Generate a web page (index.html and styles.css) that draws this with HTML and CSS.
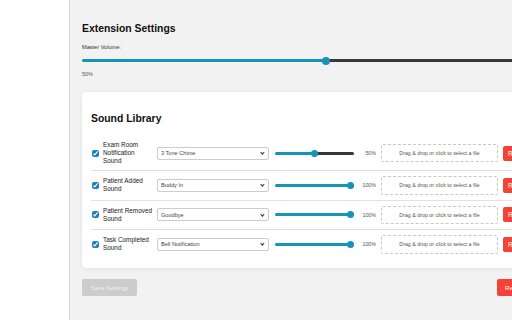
FILE: index.html
```html
<!DOCTYPE html>
<html lang="en">
<head>
    <meta charset="UTF-8">
    <title>Extension Settings</title>
    <link rel="stylesheet" href="styles.css">
</head>
<body>

<div class="layout">
    <aside class="sidebar"></aside>

    <main class="settings">
        <h2>Extension Settings</h2>

        <label class="volume-label" for="master-volume">Master Volume:</label>
        <input type="range" id="master-volume" class="slider master-slider" value="50" style="--fill:50%">
        <div class="volume-value">50%</div>

        <section class="card">
            <h3>Sound Library</h3>

            <div class="sound-row">
                <input type="checkbox" checked>
                <span class="sound-name">Exam Room Notification Sound</span>
                <span class="select-wrap"><select><option>3 Tone Chime</option></select></span>
                <input type="range" class="slider sound-slider" value="50" style="--fill:50%">
                <span class="sound-pct">50%</span>
                <div class="drop-zone">Drag &amp; drop or click to select a file</div>
                <button class="remove-btn">Remove</button>
            </div>

            <div class="sound-row">
                <input type="checkbox" checked>
                <span class="sound-name">Patient Added Sound</span>
                <span class="select-wrap"><select><option>Buddy In</option></select></span>
                <input type="range" class="slider sound-slider" value="100" style="--fill:100%">
                <span class="sound-pct">100%</span>
                <div class="drop-zone">Drag &amp; drop or click to select a file</div>
                <button class="remove-btn">Remove</button>
            </div>

            <div class="sound-row">
                <input type="checkbox" checked>
                <span class="sound-name">Patient Removed Sound</span>
                <span class="select-wrap"><select><option>Goodbye</option></select></span>
                <input type="range" class="slider sound-slider" value="100" style="--fill:100%">
                <span class="sound-pct">100%</span>
                <div class="drop-zone">Drag &amp; drop or click to select a file</div>
                <button class="remove-btn">Remove</button>
            </div>

            <div class="sound-row">
                <input type="checkbox" checked>
                <span class="sound-name">Task Completed Sound</span>
                <span class="select-wrap"><select><option>Bell Notification</option></select></span>
                <input type="range" class="slider sound-slider" value="100" style="--fill:100%">
                <span class="sound-pct">100%</span>
                <div class="drop-zone">Drag &amp; drop or click to select a file</div>
                <button class="remove-btn">Remove</button>
            </div>
        </section>

        <div class="actions">
            <button class="save-btn" disabled>Save Settings</button>
            <button class="reset-btn">Reset to Defaults</button>
        </div>
    </main>
</div>

</body>
</html>
```

FILE: styles.css
```css
html, body {
    margin: 0;
    padding: 0;
    height: 100%;
    overflow: hidden;
}
body {
    font-family: "Liberation Sans", Arial, sans-serif;
    color: #222;
    background-color: #fff;
}
.layout {
    display: flex;
    min-height: 100%;
}
.sidebar {
    flex: none;
    width: 69px;
    background-color: #fff;
    border-right: 1px solid #d4d4d4;
}
.settings {
    flex: none;
    width: 488px;
    padding: 0 12px;
    background-color: #f2f2f2;
}
.settings h2 {
    font-size: 10.4px;
    line-height: 12px;
    margin: 23px 0 9px;
    color: #111;
}
.volume-label {
    display: block;
    font-size: 5.6px;
    line-height: 7px;
    color: #333;
}
.slider {
    -webkit-appearance: none;
    appearance: none;
    display: block;
    margin: 0;
    height: 3px;
    border-radius: 2px;
    outline: none;
    background: linear-gradient(to right, #1793b5 var(--fill), #383838 var(--fill));
}
.slider::-webkit-slider-thumb {
    -webkit-appearance: none;
    width: 8px;
    height: 8px;
    border-radius: 50%;
    background-color: #1793b5;
    border: none;
}
.master-slider {
    width: 488px;
    margin-top: 8px;
}
.volume-value {
    font-size: 5.5px;
    line-height: 7px;
    margin-top: 8.5px;
    color: #555;
}
.card {
    margin-top: 14.5px;
    padding: 9px;
    background-color: #fff;
    border-radius: 4px;
    box-shadow: 0 1px 4px rgba(0, 0, 0, 0.08);
}
.card h3 {
    font-size: 10.4px;
    line-height: 12px;
    margin: 12px 0 11px;
    color: #111;
}
.sound-row {
    display: flex;
    align-items: center;
    padding: 5px 0;
    border-bottom: 1px solid #e2e2e2;
}
.sound-row:last-child {
    border-bottom: none;
}
.sound-row input[type="checkbox"] {
    flex: none;
    width: 7px;
    height: 7px;
    margin: 0 4px 0 1px;
    accent-color: #1a7fc4;
}
.sound-name {
    flex: none;
    width: 50px;
    margin-right: 4px;
    font-size: 6.4px;
    line-height: 8px;
    color: #1a1a1a;
}
.select-wrap {
    position: relative;
    flex: none;
    display: block;
    width: 112px;
    height: 13px;
    margin-right: 6px;
}
.select-wrap::after {
    content: "";
    position: absolute;
    right: 5px;
    top: 4.5px;
    width: 1.8px;
    height: 1.8px;
    border-right: 1px solid #333;
    border-bottom: 1px solid #333;
    transform: rotate(45deg);
    pointer-events: none;
}
.select-wrap select {
    -webkit-appearance: none;
    appearance: none;
    display: block;
    box-sizing: border-box;
    width: 100%;
    height: 100%;
    margin: 0;
    padding: 0 3px;
    font-family: inherit;
    font-size: 5.6px;
    color: #444;
    background-color: #fff;
    border: 1px solid #ccc;
    border-radius: 2px;
    outline: none;
}
.sound-slider {
    flex: none;
    width: 79px;
    margin-right: 6px;
}
.sound-slider::-webkit-slider-thumb {
    width: 7px;
    height: 7px;
}
.sound-pct {
    flex: none;
    width: 16px;
    margin-right: 5px;
    text-align: right;
    font-size: 5.3px;
    color: #555;
}
.drop-zone {
    flex: none;
    width: 115px;
    height: 16.5px;
    margin-right: 5px;
    border: 1px dashed #c8c8c8;
    border-radius: 2px;
    font-size: 5.3px;
    line-height: 16.5px;
    text-align: center;
    color: #555;
}
.remove-btn {
    flex: none;
    height: 15px;
    padding: 0 5px;
    font-family: inherit;
    font-size: 6.4px;
    color: #fff;
    background-color: #f44336;
    border: none;
    border-radius: 2px;
    cursor: pointer;
}
.actions {
    display: flex;
    justify-content: space-between;
    margin-top: 11px;
}
.save-btn, .reset-btn {
    height: 17.4px;
    padding: 0 8.5px;
    font-family: inherit;
    font-size: 6.2px;
    border: none;
    border-radius: 2px;
    cursor: pointer;
}
.save-btn {
    color: #f0f0f0;
    background-color: #cccccc;
    cursor: default;
}
.reset-btn {
    margin-right: 9px;
    color: #fff;
    background-color: #f44336;
}
```
